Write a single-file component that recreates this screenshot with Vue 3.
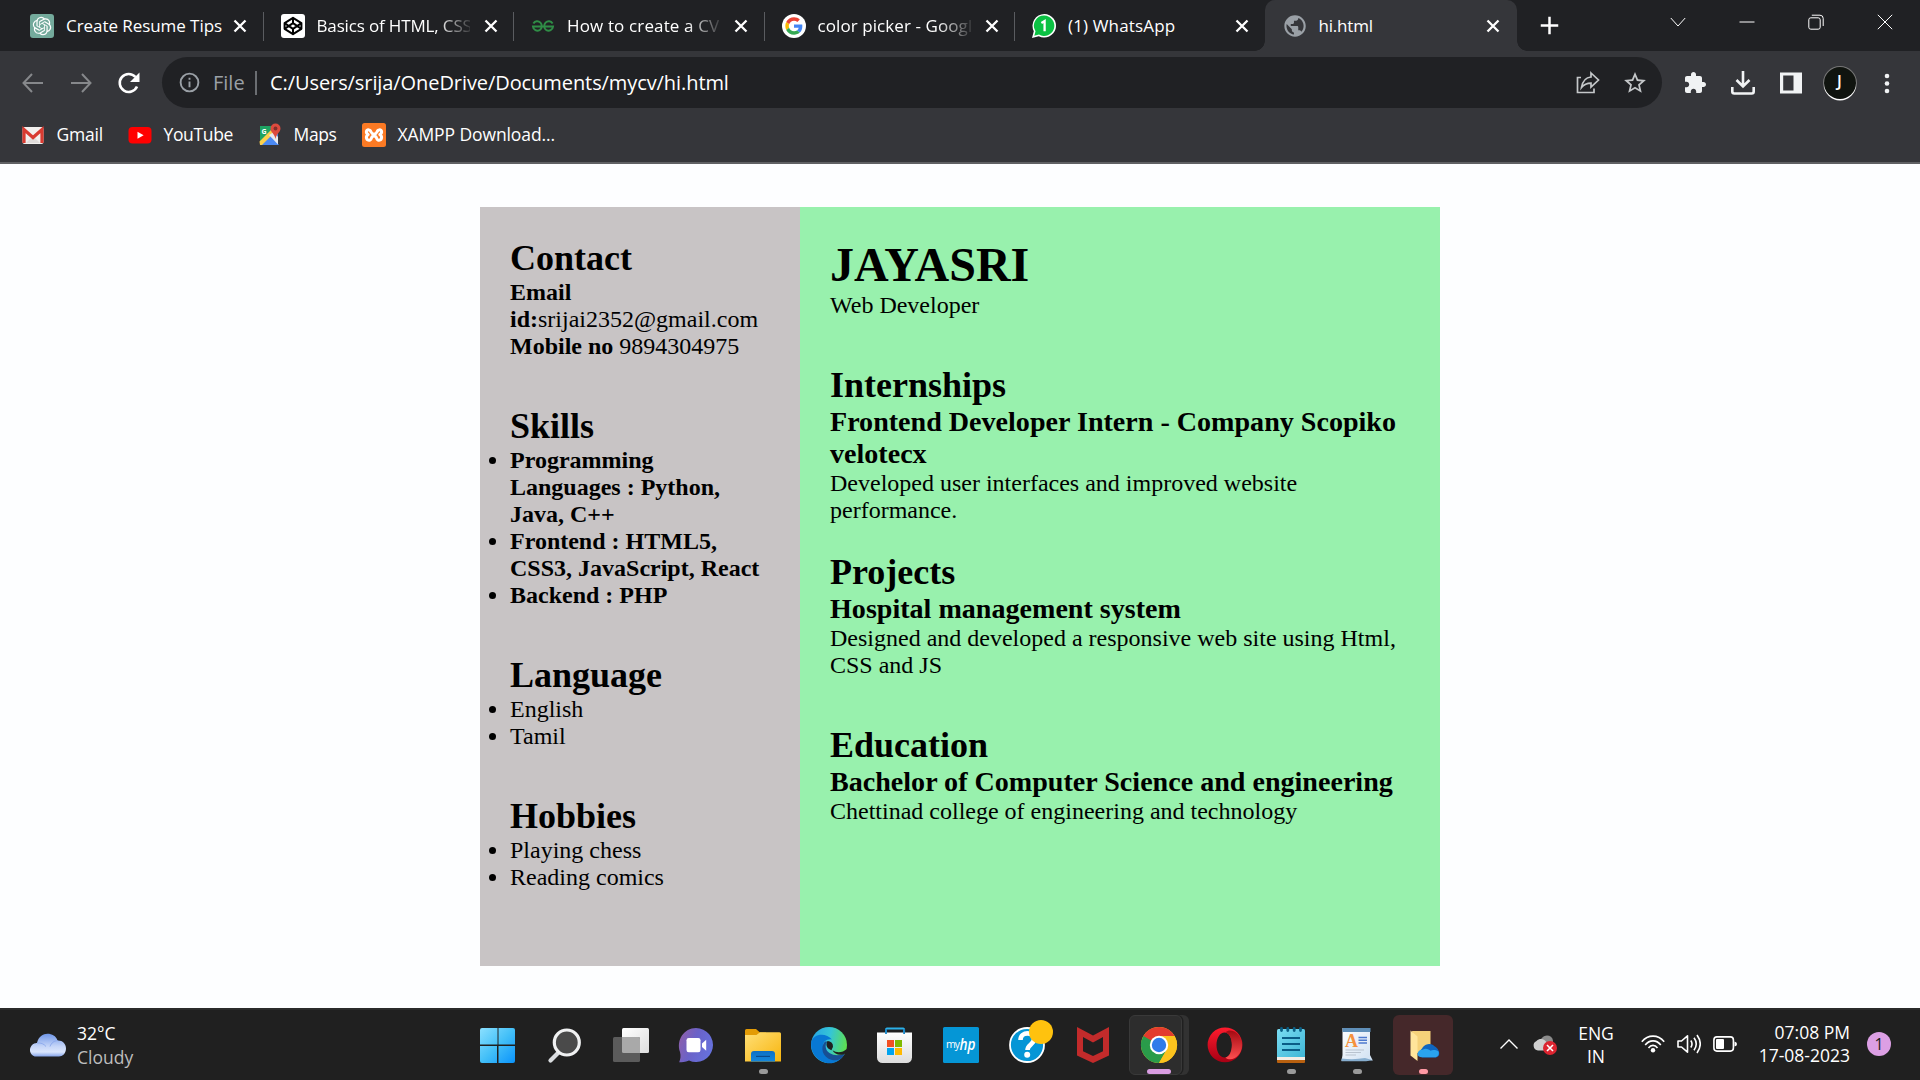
<script setup>
const icons = {
  chatgpt: '<rect width="24" height="24" rx="3" fill="#74aa9c"/><path transform="translate(2.8 2.8) scale(.77)" fill="#fff" d="M22.2819 9.8211a5.9847 5.9847 0 0 0-.5157-4.9108 6.0462 6.0462 0 0 0-6.5098-2.9A6.0651 6.0651 0 0 0 4.9807 4.1818a5.9847 5.9847 0 0 0-3.9977 2.9 6.0462 6.0462 0 0 0 .7427 7.0966 5.98 5.98 0 0 0 .511 4.9107 6.051 6.051 0 0 0 6.5146 2.9001A5.9847 5.9847 0 0 0 13.2599 24a6.0557 6.0557 0 0 0 5.7718-4.2058 5.9894 5.9894 0 0 0 3.9977-2.9001 6.0557 6.0557 0 0 0-.7475-7.0729zm-9.022 12.6081a4.4755 4.4755 0 0 1-2.8764-1.0408l.1419-.0804 4.7783-2.7582a.7948.7948 0 0 0 .3927-.6813v-6.7369l2.02 1.1686a.071.071 0 0 1 .038.052v5.5826a4.504 4.504 0 0 1-4.4945 4.4944zm-9.6607-4.1254a4.4708 4.4708 0 0 1-.5346-3.0137l.142.0852 4.783 2.7582a.7712.7712 0 0 0 .7806 0l5.8428-3.3685v2.3324a.0804.0804 0 0 1-.0332.0615L9.74 19.9502a4.4992 4.4992 0 0 1-6.1408-1.6464zM2.3408 7.8956a4.485 4.485 0 0 1 2.3655-1.9728V11.6a.7664.7664 0 0 0 .3879.6765l5.8144 3.3543-2.0201 1.1685a.0757.0757 0 0 1-.071 0l-4.8303-2.7865A4.504 4.504 0 0 1 2.3408 7.872zm16.5963 3.8558L13.1038 8.364 15.1192 7.2a.0757.0757 0 0 1 .071 0l4.8303 2.7913a4.4944 4.4944 0 0 1-.6765 8.1042v-5.6772a.79.79 0 0 0-.407-.667zm2.0107-3.0231l-.142-.0852-4.7735-2.7818a.7759.7759 0 0 0-.7854 0L9.409 9.2297V6.8974a.0662.0662 0 0 1 .0284-.0615l4.8303-2.7866a4.4992 4.4992 0 0 1 6.6802 4.66zM8.3065 12.863l-2.02-1.1638a.0804.0804 0 0 1-.038-.0567V6.0742a4.4992 4.4992 0 0 1 7.3757-3.4537l-.142.0805L8.704 5.459a.7948.7948 0 0 0-.3927.6813zm1.0976-2.3654l2.602-1.4998 2.6069 1.4998v2.9994l-2.5974 1.4997-2.6067-1.4997Z"/>',
  codepen: '<rect width="24" height="24" rx="3" fill="#fff"/><g fill="none" stroke="#000" stroke-width="2" stroke-linejoin="round"><path d="M12 3.8 20.4 9.2V14.8L12 20.2 3.6 14.8V9.2Z"/><path d="M3.6 9.2 12 14.8 20.4 9.2M3.6 14.8 12 9.2 20.4 14.8M12 3.8V9.2M12 14.8V20.2"/></g>',
  gfg: '<g fill="none" stroke="#2f8d46" stroke-width="2"><path d="M2.4 9.4C4 6.800 7.400 6.600 9.400 8.600c2.200 2.200 1.800 6.200-.8 7.600-2.800 1.300-6.200-.2-6.600-3.600H12"/><path d="M21.600 9.400C20 6.800 16.600 6.600 14.600 8.600c-2.200 2.200-1.800 6.200.8 7.600 2.800 1.300 6.200-.2 6.600-3.600H12"/></g>',
  google: '<circle cx="12" cy="12" r="12" fill="#fff"/><g transform="translate(3.3 3.3) scale(.363)"><path fill="#EA4335" d="M24 9.5c3.54 0 6.71 1.22 9.21 3.6l6.85-6.85C35.9 2.38 30.47 0 24 0 14.62 0 6.51 5.38 2.56 13.22l7.98 6.19C12.43 13.72 17.74 9.5 24 9.5z"/><path fill="#4285F4" d="M46.98 24.55c0-1.57-.15-3.09-.38-4.55H24v9.02h12.94c-.58 2.96-2.26 5.48-4.78 7.18l7.73 6c4.51-4.18 7.09-10.36 7.09-17.65z"/><path fill="#FBBC05" d="M10.53 28.59c-.48-1.45-.76-2.99-.76-4.59s.27-3.14.76-4.59l-7.98-6.19C.92 16.46 0 20.12 0 24c0 3.88.92 7.54 2.56 10.78l7.97-6.19z"/><path fill="#34A853" d="M24 48c6.48 0 11.93-2.13 15.89-5.81l-7.73-6c-2.15 1.45-4.92 2.3-8.16 2.3-6.26 0-11.57-4.22-13.47-9.91l-7.98 6.19C6.51 42.62 14.62 48 24 48z"/></g>',
  whatsapp: '<path d="M12.3 0A11.8 11.8 0 1 1 6.8 22.3L0 24 1.800 17.200A11.800 11.800 0 0 1 12.300 0Z" fill="#fff"/><path d="M12.300 1.600A10.200 10.200 0 1 1 7 20.600L2.300 21.800 3.500 17.300A10.200 10.200 0 0 1 12.300 1.600Z" fill="#0bc143"/><path d="M9.400 8.900 12.600 7V17.200" fill="none" stroke="#fff" stroke-width="2.300"/>',
  globe: '<path transform="translate(-.8 -.8) scale(1.07)" fill="#9aa0a6" d="M12 2C6.480 2 2 6.480 2 12s4.480 10 10 10 10-4.480 10-10S17.520 2 12 2zm-1 17.930c-3.950-.49-7-3.850-7-7.930 0-.62.080-1.210.210-1.790L9 15v1c0 1.100.9 2 2 2v1.930zm6.900-2.540c-.26-.81-1-1.390-1.900-1.390h-1v-3c0-.55-.45-1-1-1H8v-2h2c.55 0 1-.45 1-1V7h2c1.100 0 2-.9 2-2v-.41c2.930 1.190 5 4.060 5 7.410 0 2.080-.8 3.970-2.100 5.390z"/>',
  gmail: '<rect x="1.500" y="4" width="21" height="17" rx="2" fill="#f2f0ee"/><path d="M5 20 12 13l7 7" fill="#e0dcda"/><path d="M3 20V6.500L12 14.500 21 6.500V20" fill="none" stroke="#d93b31" stroke-width="3.200"/>',
  youtube: '<rect x="0.500" y="4" width="23" height="16.500" rx="4" fill="#f00"/><path d="M9.500 8.700V15.800L15.600 12.200Z" fill="#fff"/>',
  maps: '<path d="M2 3H20V22H2Z" fill="#4285f4"/><path d="M2 3H17L2 19Z" fill="#1ea362"/><path d="M2 22 12 12 21 22Z" fill="#4a89f3"/><path d="M1.500 18.500 13 7 16 10 4 22H2Z" fill="#fcd04b"/><path d="M11 12 20 21.500V14L16 9Z" fill="#e8eaed"/><text x="3.500" y="10.500" font-family="Open Sans, sans-serif" font-size="7" font-weight="700" fill="#fff">G</text><path d="M17.500 .5a5 5 0 0 1 5 5c0 3.700-4 5-5 10.500-1-5.500-5-6.800-5-10.500a5 5 0 0 1 5-5Z" fill="#dd4b3e"/><circle cx="17.500" cy="5.500" r="1.900" fill="#822f2b"/>',
  xampp: '<rect width="24" height="24" rx="2.500" fill="#fb7a24"/><path d="M7.500 7.200C4.500 5.500 3 9.500 6.200 11.500 3 13.500 4.500 18.200 8 17c2.500-1 .500-4 4-4s1.500 3 4 4c3.500 1.200 5-3.500 1.800-5.500 3.200-2 1.700-6-1.300-4.300-2.500 1.300-1 3.800-4.500 3.800s-2-2.500-4.500-3.800Z" fill="none" stroke="#fff" stroke-width="3" stroke-linejoin="round"/>',
}

const tabs = [
  { icon: 'chatgpt', title: 'Create Resume Tips', tracking: -0.06 },
  { icon: 'codepen', title: 'Basics of HTML, CSS', tracking: -0.15, fade: true },
  { icon: 'gfg', title: 'How to create a CV', tracking: 0.14, fade: true },
  { icon: 'google', title: 'color picker - Google', tracking: 0.08, fade: true },
  { icon: 'whatsapp', title: '(1) WhatsApp', tracking: 0.15 },
  { icon: 'globe', title: 'hi.html', tracking: -0.2, active: true },
]

const bookmarks = [
  { icon: 'gmail', label: 'Gmail' },
  { icon: 'youtube', label: 'YouTube' },
  { icon: 'maps', label: 'Maps' },
  { icon: 'xampp', label: 'XAMPP Download...' },
]

/* Taskbar glyphs: each is drawn in a 66x72 cell centred on (33, 36). */
const apps = [
  { name: 'start', art: '<g fill="url(#win)"><path d="M16 20h15.500v16.500H14V22a2 2 0 0 1 2-2Z"/><path d="M32.500 20H47a2 2 0 0 1 2 2v14.500H32.500Z"/><path d="M14 38h17v17H16a2 2 0 0 1-2-2Z"/><path d="M32.500 38H49v15a2 2 0 0 1-2 2H32.500Z"/></g>' },
  { name: 'search', art: '<path d="M27 44 18.500 52.500" stroke="#d9dcdf" stroke-width="4.200" stroke-linecap="round"/><circle cx="34.800" cy="34.500" r="12.500" fill="#4a4a4a" stroke="#f0f1f2" stroke-width="3.200"/>' },
  { name: 'taskview', art: '<rect x="24" y="20" width="27" height="25" rx="1.500" fill="url(#tv)"/><rect x="15" y="29" width="27" height="25" rx="1.500" fill="#5b5b5b"/><path d="M24 29H40.500a1.500 1.500 0 0 1 1.500 1.500V45H25.500a1.500 1.500 0 0 1-1.500-1.500Z" fill="#a9a9a9"/>' },
  { name: 'chat', art: '<path d="M32 20a17 17 0 1 1-7 32.500C21 54.500 18 54 15.200 54.200 16.500 51 17 48 16 44 12 32 20 20 32 20Z" fill="url(#chat)"/><rect x="22.500" y="30" width="14" height="14.300" rx="2.200" fill="#fff"/><path d="M38 35.500 42.200 31.700V42.800L38 39Z" fill="#fff"/>' },
  { name: 'explorer', run: true, art: '<path d="M15 35V22.500a1.500 1.500 0 0 1 1.500-1.500H26l4 3.500H36V35Z" fill="#e39b05"/><path d="M15 27H26.500L30 24.200H49.500A1.500 1.500 0 0 1 51 25.700V53.500H15Z" fill="url(#fold)"/><path d="M21 53.500V46a3 3 0 0 1 3-3H42a3 3 0 0 1 3 3V53.500Z" fill="url(#tray)"/><path d="M26 48.400H40" stroke="#0b4a8b" stroke-width="1.200"/>' },
  { name: 'edge', art: '<circle cx="33" cy="37" r="18" fill="url(#edge1)"/><path d="M15.200 34C17 25.500 30 24 36 31.500c-5-1-9.500 2-9 7.500.5 6 8 11.500 21 7.200C44.500 54 36 56.500 29.500 54.700 20 52.500 14.200 43 15.200 34Z" fill="#0878d4"/><path d="M29 33.500C24 39 26 49.500 36 52c5 1.200 9.500-.5 12.500-5.500 0-.5-.3-.8-1-.5-8 3-16 0-17.500-5.500-.7-2.500-.4-5 1.500-7Z" fill="#174f94"/><path d="M36.500 42.300C41 45.500 47 44.500 50.800 41L51.500 44.500 47.800 46.200C43.500 47.500 38.500 46.500 36.500 42.300Z" fill="#202020"/><path d="M31.500 33a5.300 5.300 0 0 1 5.500 5.600c0 1.400-1.700 2.500-1.200 3.700-4-1-7-4.500-4.300-9.300Z" fill="#202020"/>' },
  { name: 'store', art: '<path d="M24 28V21.500a.9.900 0 0 1 .9-.9H41.200a.9.900 0 0 1 .9.900V28" fill="none" stroke="#2bb0e8" stroke-width="2"/><path d="M15 24.500H50V49.500a5.500 5.500 0 0 1-5.500 5.500H20.500A5.500 5.500 0 0 1 15 49.500Z" fill="url(#bag)"/><path d="M24 21V26M42.100 21V26" stroke="#1a86c7" stroke-width="1.800"/><path d="M25 32h7v7h-7z" fill="#f25022"/><path d="M33 32h7v7h-7z" fill="#7fba00"/><path d="M25 40h7v7h-7z" fill="#00a4ef"/><path d="M33 40h7v7h-7z" fill="#ffb900"/>' },
  { name: 'myhp', art: '<rect x="15" y="19" width="36" height="36" rx="1.500" fill="#0596d6"/><text x="18" y="40" font-family="Open Sans, sans-serif" font-size="10.500" fill="#fff" textLength="14">my</text><text x="31.500" y="41.500" font-family="Open Sans, sans-serif" font-size="17" font-style="italic" font-weight="600" fill="#fff" textLength="16" lengthAdjust="spacingAndGlyphs">hp</text>' },
  { name: 'help', art: '<circle cx="33" cy="37" r="17" fill="#0596d6" stroke="#fff" stroke-width="1.800"/><path d="M26.500 32c0-9 14-8.500 13.500-.5-.3 5-6.500 5-6.500 10.500" fill="none" stroke="#fff" stroke-width="4.600"/><circle cx="33.200" cy="46.800" r="3" fill="#fff"/><circle cx="47" cy="24" r="12" fill="#ffc20e"/>' },
  { name: 'mcafee', art: '<path fill-rule="evenodd" d="M17 19 33 27.500 49 19V47.500L33 55 17 47.500ZM23 29V43.300L33 48 43 43.300V29L33 34.500Z" fill="#c22b2b"/>' },
  { name: 'chrome', active: true, art: '<circle cx="33" cy="37" r="18" fill="#fcc31e"/><path d="M17.410 28A18 18 0 0 1 48.590 28H33L25.200 41.500Z" fill="#e33b2e"/><path d="M33 37 17.410 28A18 18 0 0 0 33 55L40.800 41.500Z" fill="#2a9c4a"/><path d="M33 28H48.590A18 18 0 0 1 33 55L40.800 41.500Z" fill="#fcc31e"/><circle cx="33" cy="37" r="9.200" fill="#fff"/><circle cx="33" cy="37" r="7.200" fill="#2f7bea"/>' },
  { name: 'opera', art: '<path fill-rule="evenodd" d="M33 19.500a17.300 17.300 0 1 0 0 34.800 17.300 17.300 0 1 0 0-34.800ZM32.500 24.500c4.500 0 7.500 5.500 7.500 12.500s-3 12.500-7.500 12.500S24.500 44 24.500 37s3.500-12.500 8-12.500Z" fill="url(#opera)"/><path d="M33.500 24.500C42 26 42 48 33.500 49.400 39 55 50.200 48 50 37 50 26 39 19 33.500 24.500Z" fill="url(#opera2)"/>' },
  { name: 'notepad', run: true, art: '<path d="M19 49H47V54a1 1 0 0 1-1 1H20a1 1 0 0 1-1-1Z" fill="#b8600f"/><path d="M19 47H47V52H19Z" fill="#f3ece4"/><path d="M19 22.500a1.500 1.500 0 0 1 1.500-1.500H45.500A1.500 1.500 0 0 1 47 22.500V49H19Z" fill="url(#note)"/><path d="M24 30H42M24 36H42M24 42H42" stroke="#0a5c86" stroke-width="2"/><path d="M23.500 20.500V22.500M29.800 20.500V22.500M36.200 20.500V22.500M42.500 20.500V22.500" stroke="#0b5f85" stroke-width="2.800" stroke-linecap="round"/>' },
  { name: 'wordpad', run: true, art: '<path d="M18.500 20H46V47L48.800 52.500Q44 51.500 42 53H17.500L18.500 47Z" fill="url(#wp)"/><path d="M18.500 20H46.500V24H18.500Z" fill="#5f8fb8"/><path d="M17.500 50.500Q30 52 41 50L48.800 52.200 42 53.300H17.500Z" fill="#87aecf"/><text x="21" y="38.500" font-family="Liberation Serif, serif" font-size="18" font-weight="700" fill="#f5923e">A</text><path d="M34.500 29.500H43M34.500 32.200H43M34.500 35H43" stroke="#4d79ce" stroke-width="1.400"/><path d="M21.500 42H40M21.500 44.500H37M21.500 47H32" stroke="#b9c3cf" stroke-width="1"/>' },
  { name: 'onedrive', alert: true, run: true, art: '<path d="M22 23H40.500V45H26Z" fill="#f5d27a"/><path d="M20.500 22.500 27.500 28.500V53L20.500 47.500Z" fill="#ffe59b"/><path d="M32 49.500a5.500 5.500 0 0 1 0-9 7.800 7.800 0 0 1 12.500-2.300c3.500 2 5.500 5.500 4.500 9-1 1.800-2.500 2.300-4.500 2.300Z" fill="#0f66c0"/><path d="M27.500 46a4.500 4.500 0 0 1 5-4.300c3-2.200 6.500-.5 8 1 2-1 5.500-.8 8 .8 1 3-.8 5.800-4 5.800H32c-3 0-4.500-1.500-4.500-3.300Z" fill="#2aa3ee"/>' },
]

const sideSections = [
  { title: 'Skills', bold: true, items: ['Programming Languages : Python, Java, C++', 'Frontend : HTML5, CSS3, JavaScript, React', 'Backend : PHP'] },
  { title: 'Language', items: ['English', 'Tamil'] },
  { title: 'Hobbies', items: ['Playing chess', 'Reading comics'] },
]

const mainSections = [
  { title: 'Internships', sub: 'Frontend Developer Intern - Company Scopiko velotecx', text: 'Developed user interfaces and improved website performance.', tight: true },
  { title: 'Projects', sub: 'Hospital management system', text: 'Designed and developed a responsive web site using Html, CSS and JS' },
  { title: 'Education', sub: 'Bachelor of Computer Science and engineering', text: 'Chettinad college of engineering and technology' },
]
</script>

<template>
  <div class="screen">
    <svg class="defs" width="0" height="0" aria-hidden="true">
      <defs>
        <linearGradient id="win" gradientUnits="userSpaceOnUse" x1="14" y1="20" x2="49" y2="55"><stop offset="0" stop-color="#8be0ff" /><stop offset=".5" stop-color="#44c0f8" /><stop offset="1" stop-color="#0a93fb" /></linearGradient>
        <linearGradient id="tv" x1="0" y1="0" x2="1" y2="1"><stop offset="0" stop-color="#fff" /><stop offset="1" stop-color="#dedede" /></linearGradient>
        <linearGradient id="chat" x1="0" y1=".2" x2="1" y2=".6"><stop offset="0" stop-color="#8f5fa9" /><stop offset=".45" stop-color="#6a62c8" /><stop offset="1" stop-color="#6672dd" /></linearGradient>
        <linearGradient id="fold" x1="0" y1="0" x2="1" y2="1"><stop offset="0" stop-color="#ffdf77" /><stop offset="1" stop-color="#f8b50d" /></linearGradient>
        <linearGradient id="tray" x1="0" y1="0" x2="0" y2="1"><stop offset="0" stop-color="#0e6fc4" /><stop offset="1" stop-color="#1488dd" /></linearGradient>
        <linearGradient id="edge1" x1="0" y1=".3" x2="1" y2=".5"><stop offset="0" stop-color="#27a5e4" /><stop offset=".5" stop-color="#35c5d6" /><stop offset="1" stop-color="#5fe04c" /></linearGradient>
        <linearGradient id="bag" x1="0" y1="0" x2="0" y2="1"><stop offset="0" stop-color="#fff" /><stop offset="1" stop-color="#dcdcdc" /></linearGradient>
        <linearGradient id="opera" x1="0" y1="0" x2="0" y2="1"><stop offset="0" stop-color="#ff1b2d" /><stop offset="1" stop-color="#a70014" /></linearGradient>
        <linearGradient id="opera2" x1="0" y1="0" x2="0" y2="1"><stop offset="0" stop-color="#a30a12" /><stop offset="1" stop-color="#ff4f50" /></linearGradient>
        <linearGradient id="note" x1="0" y1="0" x2="1" y2="1"><stop offset="0" stop-color="#7adcf2" /><stop offset="1" stop-color="#3fb6d6" /></linearGradient>
        <linearGradient id="wp" x1="0" y1="0" x2="1" y2="1"><stop offset="0" stop-color="#fff" /><stop offset="1" stop-color="#cfe0f2" /></linearGradient>
        <linearGradient id="cloud" x1="0" y1="0" x2="0" y2="1"><stop offset="0" stop-color="#6f96e8" /><stop offset=".55" stop-color="#c5d5f8" /><stop offset=".8" stop-color="#dbe6fd" /><stop offset="1" stop-color="#86a5ea" /></linearGradient>
      </defs>
    </svg>

    <header class="tabstrip">
      <div v-for="tab in tabs" :key="tab.title" class="tab" :class="{ active: tab.active }">
        <svg class="favicon" viewBox="0 0 24 24" v-html="icons[tab.icon]" />
        <span class="tab-title" :class="{ fade: tab.fade }" :style="{ letterSpacing: tab.tracking + 'px' }">{{ tab.title }}</span>
        <svg class="tab-close" viewBox="0 0 14 14"><path d="M1.500 1.500 12.500 12.500M12.500 1.500 1.500 12.500" stroke="#fff" stroke-width="2.300" /></svg>
      </div>
      <svg class="new-tab" viewBox="0 0 20 20"><path d="M10 .8V19.200M.8 10H19.200" stroke="#fff" stroke-width="2.600" /></svg>
      <div class="window-controls">
        <svg viewBox="0 0 16 16"><path d="M.8 4 8 12 15.200 4" /></svg>
        <svg viewBox="0 0 16 16"><path d="M.5 8H15.500" /></svg>
        <svg viewBox="0 0 16 16"><rect x=".8" y="3.800" width="11.400" height="11.400" rx="2" /><path d="M3.800 1.200H12A3.200 3.200 0 0 1 15.200 4.400V12" /></svg>
        <svg viewBox="0 0 16 16"><path d="M.8 .8 15.200 15.200M15.200 .8 .8 15.200" /></svg>
      </div>
    </header>

    <div class="toolbar">
      <nav class="nav">
        <svg class="dim" viewBox="0 0 24 24"><path d="M22 12H3M11 3 2.500 12 11 21" /></svg>
        <svg class="dim" viewBox="0 0 24 24"><path d="M2 12H21M13 3 21.500 12 13 21" /></svg>
        <svg viewBox="0 0 24 24"><path d="M20 15.500A9 9 0 1 1 18.500 6" stroke-width="2.600" /><path d="M22.500 1.500V11H13Z" fill="#fff" stroke="none" /></svg>
      </nav>
      <div class="omnibox">
        <svg class="info" viewBox="0 0 22 22"><circle cx="11" cy="11" r="9.300" /><path d="M11 10V16M11 6V8.200" /></svg>
        <span class="scheme">File</span>
        <i class="bar"></i>
        <span class="url">C:/Users/srija/OneDrive/Documents/mycv/hi.html</span>
        <svg class="share" viewBox="0 0 24 24"><path d="M5 6.500H1.500V21.500H18V17.500" /><path d="M15 2 22.500 9 15 16V12.200C10.500 12.200 8 13.500 5.500 16.500 6.500 10.500 9.500 6.500 15 6Z" /></svg>
        <svg class="star" viewBox="1 1 22 22"><path d="M22 9.240l-7.190-.62L12 2 9.190 8.630 2 9.240l5.460 4.730L5.820 21 12 17.270 18.180 21l-1.630-7.030L22 9.240zM12 15.400l-3.760 2.270 1-4.280-3.320-2.880 4.380-.38L12 6.100l1.710 4.040 4.380.38-3.320 2.880 1 4.280L12 15.400z" fill="#c4c7c9" /></svg>
      </div>
      <div class="actions">
        <svg viewBox="0 0 24 24"><path fill="#f1f3f4" d="M20.500 11H19V7c0-1.100-.9-2-2-2h-4V3.500C13 2.120 11.880 1 10.500 1S8 2.120 8 3.500V5H4c-1.100 0-1.990.9-1.990 2v3.800H3.500c1.490 0 2.700 1.210 2.700 2.700s-1.210 2.700-2.700 2.700H2V20c0 1.100.9 2 2 2h3.800v-1.500c0-1.490 1.210-2.700 2.700-2.700 1.490 0 2.700 1.210 2.700 2.700V22H17c1.100 0 2-.9 2-2v-4h1.500c1.380 0 2.500-1.120 2.500-2.500S21.880 11 20.500 11z" /></svg>
        <svg viewBox="0 0 24 24" fill="none" stroke="#f1f3f4" stroke-width="2.600"><path d="M12 0V15M5.500 9 12 15.500 18.500 9M1.300 16V20.500A2 2 0 0 0 3.300 22.500H20.700A2 2 0 0 0 22.700 20.500V16" /></svg>
        <svg viewBox="0 0 24 24"><path fill-rule="evenodd" fill="#f1f3f4" d="M1 1.500H23V22.500H1ZM4.200 4.500V19.500H14.500V4.500Z" /></svg>
        <span class="avatar">J</span>
        <svg class="more" viewBox="0 0 6 22"><circle cx="3" cy="3" r="2.300" /><circle cx="3" cy="10.500" r="2.300" /><circle cx="3" cy="18" r="2.300" /></svg>
      </div>
    </div>

    <div class="bookmarks">
      <div v-for="b in bookmarks" :key="b.label" class="bookmark" :class="b.icon">
        <svg viewBox="0 0 24 24" v-html="icons[b.icon]" />
        <span>{{ b.label }}</span>
      </div>
    </div>

    <main class="page">
      <article class="resume">
        <aside class="side">
          <section>
            <h2>Contact</h2>
            <p><b>Email id:</b>srijai2352@gmail.com</p>
            <p><b>Mobile no</b> 9894304975</p>
          </section>
          <section v-for="s in sideSections" :key="s.title">
            <h2>{{ s.title }}</h2>
            <ul :class="{ bold: s.bold }">
              <li v-for="i in s.items" :key="i">{{ i }}</li>
            </ul>
          </section>
        </aside>
        <div class="body">
          <section>
            <h1>JAYASRI</h1>
            <p>Web Developer</p>
          </section>
          <section v-for="s in mainSections" :key="s.title" :class="{ tight: s.tight }">
            <h2>{{ s.title }}</h2>
            <h3>{{ s.sub }}</h3>
            <p>{{ s.text }}</p>
          </section>
        </div>
      </article>
    </main>

    <footer class="taskbar">
      <div class="weather">
        <svg viewBox="0 0 36 24"><path d="M6.500 23.500A6.500 6.500 0 0 1 1 13.500C2.500 10.500 5.500 10 7 10 8.500 3.500 13 .8 17.500 .8S26 3 27.500 7.500C32 7 36 10.500 36 15.500S32.500 23.500 29 23.500Z" fill="url(#cloud)" /><path d="M7 10c4-.5 7 1 9 3.500M20 13.500C21.500 9.500 24 8 27.500 7.500" fill="none" stroke="#8eabee" stroke-width="1" /></svg>
        <div class="weather-text"><span>32°C</span><span class="muted">Cloudy</span></div>
      </div>
      <div class="apps">
        <div v-for="a in apps" :key="a.name" class="app" :class="{ active: a.active, alert: a.alert, run: a.run }">
          <svg viewBox="0 0 66 72" v-html="a.art" />
        </div>
      </div>
      <div class="tray">
        <svg class="chev" viewBox="0 0 18 10"><path d="M.5 9.500 9 1 17.500 9.500" fill="none" stroke="#fff" stroke-width="1.400" /></svg>
        <svg class="sync" viewBox="0 0 24 20"><path d="M8 4C12-1.500 19 0 20 5.500V9H8Z" fill="#8b8b8b" /><path d="M5 15.500A5 5 0 0 1 3.500 6C7 2.500 12 4 13.500 7.500L16 15.500Z" fill="#cfcfcf" /><circle cx="17" cy="13" r="7" fill="#dc2430" /><path d="M14 10 20 16M20 10 14 16" stroke="#fff" stroke-width="1.600" /></svg>
        <div class="lang"><span>ENG</span><span>IN</span></div>
        <svg class="wifi" viewBox="0 0 24 18" fill="none" stroke="#fff" stroke-width="1.600"><path d="M.8 6.800C7-.8 17-.8 23.200 6.800M4.200 10C8.500 4.500 15.500 4.500 19.800 10M7.500 13C10 9.500 14 9.500 16.500 13" /><circle cx="12" cy="15.200" r="2.200" fill="#fff" stroke="none" /></svg>
        <svg class="sound" viewBox="0 0 24 20" fill="none" stroke="#fff" stroke-width="1.600" stroke-linejoin="round"><path d="M1 7H4.500L10.500 1.800V18.200L4.500 13H1ZM13.800 6.500Q16.200 10 13.800 13.500M17 3.800Q21.500 10 17 16.200M20 1Q26.500 10 20 19" /></svg>
        <svg class="battery" viewBox="0 0 24 16"><rect x=".9" y=".9" width="19.500" height="14.200" rx="3" fill="none" stroke="#fff" stroke-width="1.600" /><rect x="3" y="3" width="8" height="10" rx="1" fill="#fff" /><path d="M21.500 5.500Q24 6 24 8T21.500 10.500Z" fill="#fff" /></svg>
        <div class="clock"><span>07:08 PM</span><span>17-08-2023</span></div>
        <span class="count">1</span>
      </div>
    </footer>
  </div>
</template>

<style>
html,
body {
  margin: 0;
  overflow: hidden;
}
</style>

<style scoped>
.screen {
  display: flex;
  flex-direction: column;
  width: 1920px;
  height: 1080px;
  overflow: hidden;
  font-family: "Open Sans", "Noto Sans", sans-serif;
  background: #fdfeff;
  color: #fff;
}
.defs { position: absolute; }
svg { display: block; flex: none; }

.tabstrip {
  display: flex;
  align-items: center;
  height: 51px;
  padding-left: 14px;
  background: #202124;
}
.tab {
  position: relative;
  box-sizing: border-box;
  display: flex;
  align-items: center;
  flex: none;
  width: 250.500px;
  height: 51px;
  padding-left: 16px;
}
.tab:not(.active)::after {
  content: "";
  position: absolute;
  right: 1px;
  top: 12px;
  width: 1px;
  height: 29px;
  background: #5a5c60;
}
.tab:nth-child(5)::after { display: none; }
.tab.active {
  width: 252px;
  margin-left: -1.500px;
  padding-left: 17.500px;
  background: #35363a;
  border-radius: 10px 10px 0 0;
}
.tab.active::before,
.tab.active::after {
  content: "";
  position: absolute;
  bottom: 0;
  width: 10px;
  height: 10px;
}
.tab.active::before { left: -10px; background: radial-gradient(circle at 0 0, transparent 9.500px, #35363a 10px); }
.tab.active::after { right: -10px; background: radial-gradient(circle at 100% 0, transparent 9.500px, #35363a 10px); }
.favicon { width: 24px; height: 24px; }
.tab-title {
  width: 157px;
  margin-left: 12px;
  overflow: hidden;
  white-space: nowrap;
  font-size: 17px;
  line-height: 26px;
}
.tab-title.fade { width: 153px; margin-right: 4px; mask-image: linear-gradient(90deg, #000 78%, transparent 103%); }
.tab-close { width: 14px; height: 14px; margin-left: 10px; }
.new-tab { width: 19px; height: 19px; margin-left: 23px; }
.window-controls {
  display: flex;
  gap: 53px;
  margin-left: 111px;
  padding-bottom: 8px;
}
.window-controls svg { width: 16px; height: 16px; fill: none; stroke: #fff; stroke-width: 1; }

.toolbar {
  display: flex;
  align-items: center;
  height: 63px;
  background: #35363a;
}
.nav { display: flex; gap: 24px; width: 141px; padding-left: 21px; }
.nav svg { width: 24px; height: 24px; fill: none; stroke: #fff; stroke-width: 2; }
.nav .dim { stroke: #86888b; }
.omnibox {
  box-sizing: border-box;
  display: flex;
  align-items: center;
  width: 1500px;
  height: 51px;
  padding: 0 15px 0 17px;
  border-radius: 26px;
  background: #202124;
  font-size: 20px;
}
.info { width: 21px; height: 21px; fill: none; stroke: #9aa0a6; stroke-width: 2; }
.scheme { width: 42px; margin-left: 13px; color: #9aa0a6; }
.bar { width: 2px; height: 24px; background: #6b6e72; }
.url { margin-left: 13px; letter-spacing: -0.080px; white-space: nowrap; }
.share { width: 24px; height: 24px; margin-left: auto; fill: none; stroke: #c4c7c9; stroke-width: 1.700; }
.star { width: 24px; height: 24px; margin-left: 23px; }
.actions { display: flex; align-items: center; margin-left: 21px; }
.actions svg { width: 24px; height: 24px; margin-right: 24px; }
.actions svg:nth-child(3) { margin-right: 20.500px; }
.avatar {
  width: 32px;
  height: 32px;
  margin-right: 28.500px;
  border-radius: 50%;
  background: #10140f;
  box-shadow: 0 1.500px 0 #fff, 0 0 0 1px #777;
  font-size: 16px;
  font-weight: 600;
  line-height: 29px;
  text-align: center;
}
.actions .more { width: 6px; height: 22px; margin: 2px 0 0; fill: #f1f3f4; }

.bookmarks {
  display: flex;
  align-items: center;
  box-sizing: border-box;
  height: 50px;
  padding: 0 0 7px 21px;
  background: #35363a;
  border-bottom: 2px solid #606164;
  font-size: 17.500px;
  letter-spacing: -0.200px;
}
.bookmark { display: flex; align-items: center; gap: 11.500px; }
.bookmark svg { width: 24px; height: 24px; }
.bookmark span { padding-bottom: 1px; }
.bookmark.gmail { width: 107px; }
.bookmark.youtube { width: 130px; letter-spacing: -0.350px; }
.bookmark.maps { width: 104px; letter-spacing: -0.350px; }
.bookmark.xampp { letter-spacing: -0.100px; }

.page {
  height: 844px;
  padding-top: 43px;
  box-sizing: border-box;
  color: #000;
  font-family: "Liberation Serif", "Times New Roman", serif;
  font-size: 24px;
  line-height: 27px;
}
.resume { display: flex; width: 960px; height: 759px; margin: 0 auto; }
.side { box-sizing: border-box; width: 320px; padding: 31px 30px 29px; background: #c8c4c5; }
.body { box-sizing: border-box; width: 640px; padding: 31px 30px 29px; background: #98f1ad; }
section { margin-bottom: 46px; }
section.tight { margin-bottom: 28px; }
h1, h2, h3, p, ul { margin: 0; padding: 0; }
h1 { font-size: 48px; line-height: 54px; }
h2 { font-size: 36px; line-height: 41px; }
h3 { font-size: 28.080px; line-height: 32px; }
.bold { font-weight: 700; }

.taskbar {
  position: relative;
  display: flex;
  box-sizing: border-box;
  height: 72px;
  background: #202020;
  box-shadow: inset 0 2px 0 #2b2b2b;
  font-size: 17.500px;
}
.weather { display: flex; width: 436px; padding: 13px 0 0 30px; }
.weather svg { width: 36px; height: 24px; margin-top: 12px; }
.weather-text { display: flex; flex-direction: column; margin-left: 11px; line-height: 24px; }
.muted { color: #bdbdbd; }
.apps { display: flex; }
.app { position: relative; width: 66px; height: 72px; }
.app svg { position: relative; width: 66px; height: 72px; }
.app.run::after,
.app.active::after {
  content: "";
  position: absolute;
  left: 28.500px;
  top: 61px;
  width: 9px;
  height: 5px;
  border-radius: 3px;
  background: #9a9a9a;
}
.app.active::after { left: 21px; width: 24px; background: #d99de2; }
.app.alert::after { background: #ff99a4; }
.app.active::before,
.app.alert::before {
  content: "";
  position: absolute;
  left: 3px;
  top: 7px;
  box-sizing: border-box;
  width: 60px;
  height: 60px;
  border-radius: 6px;
}
.app.active::before { width: 53px; background: #2d2d2d; border: 1px solid #393939; box-shadow: 1.500px 0 0 #202020, 7px 0 0 #323232; }
.app.alert::before { background: #45282a; }
.tray { display: flex; align-items: center; margin-left: 44px; }
.chev { width: 18px; height: 10px; }
.sync { width: 24px; height: 20px; margin-left: 15px; margin-top: 2px; }
.lang, .clock { display: flex; flex-direction: column; line-height: 23px; }
.lang { width: 40px; margin-left: 19px; align-items: center; padding-top: 1px; }
.wifi { width: 24px; height: 18px; margin-left: 25px; margin-top: -1px; }
.sound { width: 24px; height: 20px; margin-left: 12px; }
.battery { width: 24px; height: 16px; margin-left: 12px; }
.clock { width: 113px; align-items: flex-end; white-space: nowrap; padding-bottom: 1px; letter-spacing: 0; }
.count {
  width: 24px;
  height: 24px;
  margin-left: 17px;
  border-radius: 50%;
  background: #dc9fe4;
  color: #202020;
  font-size: 16px;
  line-height: 24px;
  text-align: center;
}
</style>
